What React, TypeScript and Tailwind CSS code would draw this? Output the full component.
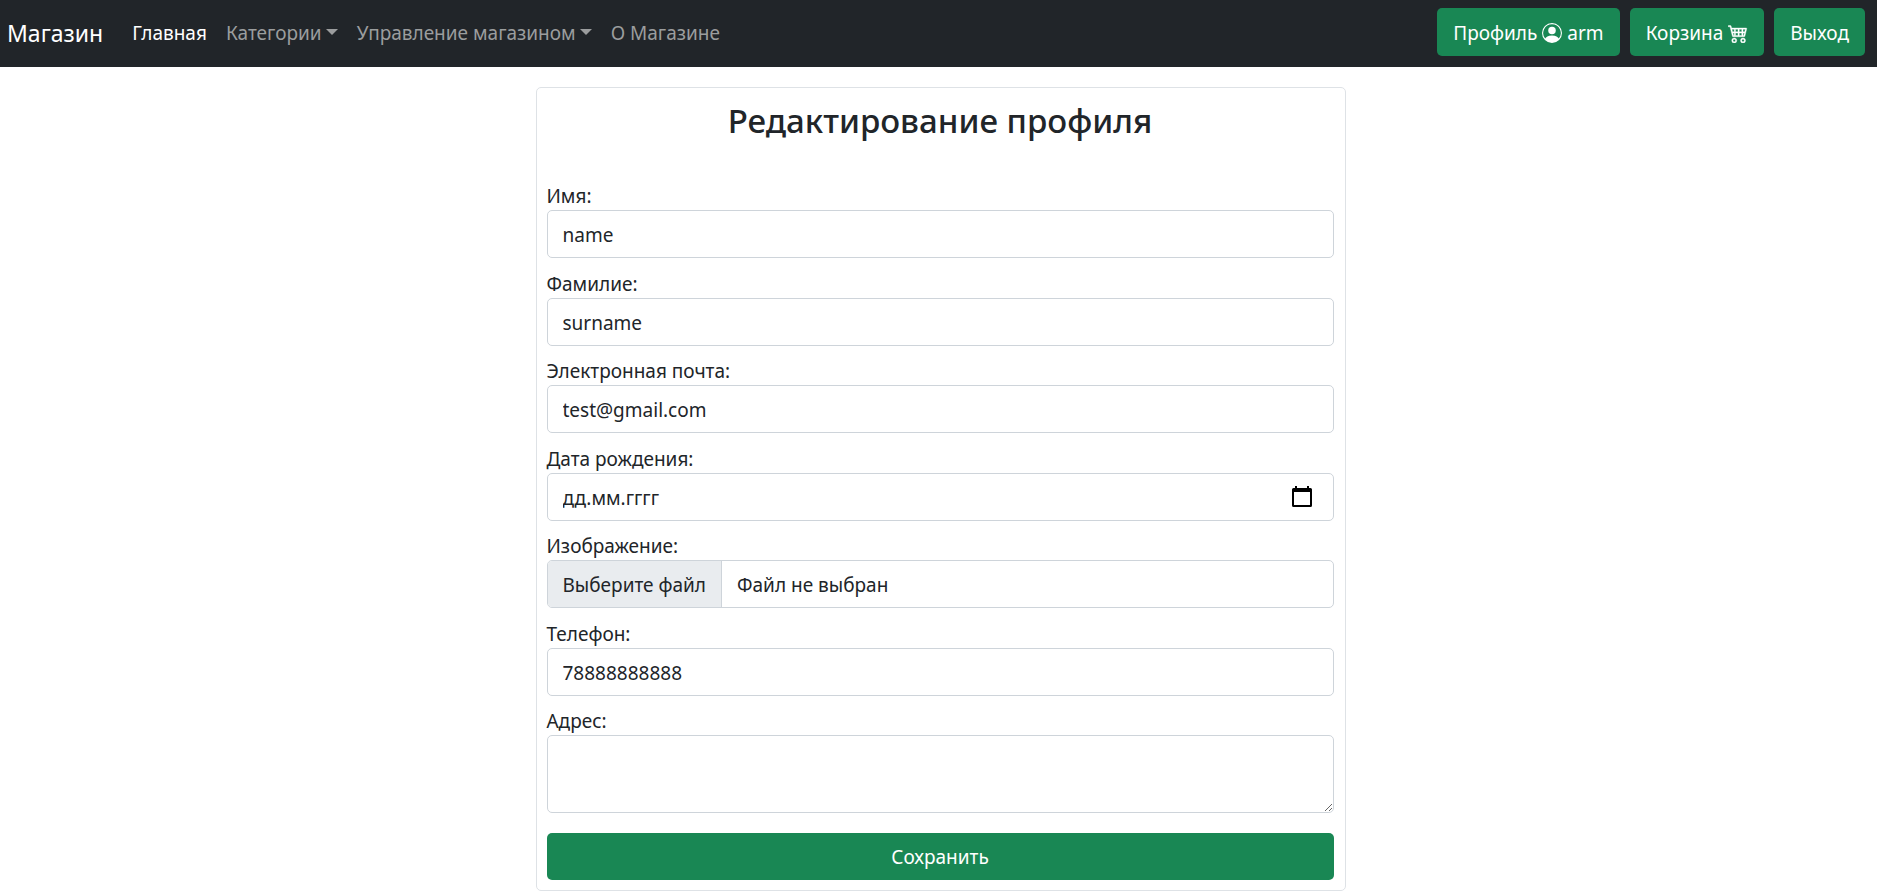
import type { ReactNode } from "react";
import { BsCart4, BsPersonCircle } from "react-icons/bs";

const control =
  "w-full rounded-[5px] border border-[#ced4da] bg-white px-[15px] pt-[2px] text-[#212529] outline-none placeholder:text-[#212529] placeholder:opacity-100 focus:border-[#86b7fe]";

function Caret() {
  return (
    <span className="mb-[3px] h-0 w-0 border-x-[6px] border-t-[6px] border-x-transparent border-t-current" />
  );
}

function NavButton({ children }: { children: ReactNode }) {
  return (
    <button
      type="button"
      className="flex h-12 items-center gap-[5px] rounded-[5px] bg-[#198754] px-4 pt-[2px] text-white hover:bg-[#157347]"
    >
      {children}
    </button>
  );
}

function Field({ id, label, children }: { id: string; label: string; children: ReactNode }) {
  return (
    <div className="flex flex-col">
      <label htmlFor={id} className="self-start pt-[2px] leading-[28px]">
        {label}
      </label>
      {children}
    </div>
  );
}

function CalendarIcon() {
  return (
    <svg viewBox="0 0 20 21" className="h-[21px] w-5" fill="currentColor" aria-hidden="true">
      <path d="M3 0h2v2h10V0h2v2h1.500a1.500 1.500 0 0 1 1.500 1.500v16a1.500 1.500 0 0 1-1.500 1.500h-17A1.500 1.500 0 0 1 0 19.500v-16A1.500 1.500 0 0 1 1.500 2H3zM2 6v13h16V6z" />
    </svg>
  );
}

export default function App() {
  return (
    <div className="flex min-h-screen flex-col bg-white font-['Noto_Sans','Open_Sans',sans-serif] text-[19px] leading-[30px] text-[#212529]">
      <header className="flex h-[67px] items-center justify-between bg-[#212529] pr-3 pb-[3px] pl-[7px]">
        <nav className="flex items-center gap-[19px] pt-[2px] text-[#9b9d9e]">
          <a href="#" className="mr-[10px] text-[23px] text-white">
            Магазин
          </a>
          <a href="#" className="text-white">
            Главная
          </a>
          <button type="button" className="flex items-center gap-1">
            Категории
            <Caret />
          </button>
          <button type="button" className="flex items-center gap-1">
            Управление магазином
            <Caret />
          </button>
          <a href="#">О Магазине</a>
        </nav>
        <div className="flex items-center gap-[10px]">
          <NavButton>
            Профиль <BsPersonCircle size={20} /> arm
          </NavButton>
          <NavButton>
            Корзина <BsCart4 size={20} className="stroke-current stroke-[0.3]" />
          </NavButton>
          <NavButton>Выход</NavButton>
        </div>
      </header>

      <main className="flex flex-1 flex-col items-center pt-5">
        <section className="ml-1 flex w-full max-w-[810px] flex-1 flex-col rounded-[5px] border border-[#dee2e6] p-[10px] pr-[11px]">
          <h1 className="text-center text-[33px] leading-[46px] font-medium">
            Редактирование профиля
          </h1>
          <form className="mt-9 flex flex-1 flex-col" onSubmit={(e) => e.preventDefault()}>
            <div className="flex flex-1 flex-col justify-between">
              <Field id="name" label="Имя:">
                <input id="name" type="text" defaultValue="name" className={`${control} h-12`} />
              </Field>
              <Field id="surname" label="Фамилие:">
                <input id="surname" type="text" defaultValue="surname" className={`${control} h-12`} />
              </Field>
              <Field id="email" label="Электронная почта:">
                <input id="email" type="email" defaultValue="test@gmail.com" className={`${control} h-12`} />
              </Field>
              <Field id="birthday" label="Дата рождения:">
                <div className={`${control} flex h-12 items-center`}>
                  <input
                    id="birthday"
                    type="text"
                    placeholder="дд.мм.гггг"
                    className="min-w-0 flex-1 outline-none placeholder:text-[#212529] placeholder:opacity-100"
                  />
                  <button type="button" aria-label="Календарь" className="mr-[6px] pb-[2px] text-black">
                    <CalendarIcon />
                  </button>
                </div>
              </Field>
              <Field id="image" label="Изображение:">
                <input id="image" type="file" className="sr-only" />
                <label
                  htmlFor="image"
                  className="flex h-12 cursor-pointer items-stretch overflow-hidden rounded-[5px] border border-[#ced4da]"
                >
                  <span className="flex items-center border-r border-[#ced4da] bg-[#e9ecef] px-[15px] pt-[2px]">
                    Выберите файл
                  </span>
                  <span className="flex items-center px-[15px] pt-[2px]">Файл не выбран</span>
                </label>
              </Field>
              <Field id="phone" label="Телефон:">
                <input id="phone" type="tel" defaultValue="78888888888" className={`${control} h-12`} />
              </Field>
              <Field id="address" label="Адрес:">
                <textarea id="address" className={`${control} block h-[78px] resize-y py-2`} />
              </Field>
            </div>
            <button
              type="submit"
              className="mt-5 h-[47px] rounded-[5px] bg-[#198754] text-white hover:bg-[#157347]"
            >
              Сохранить
            </button>
          </form>
        </section>
      </main>
    </div>
  );
}
